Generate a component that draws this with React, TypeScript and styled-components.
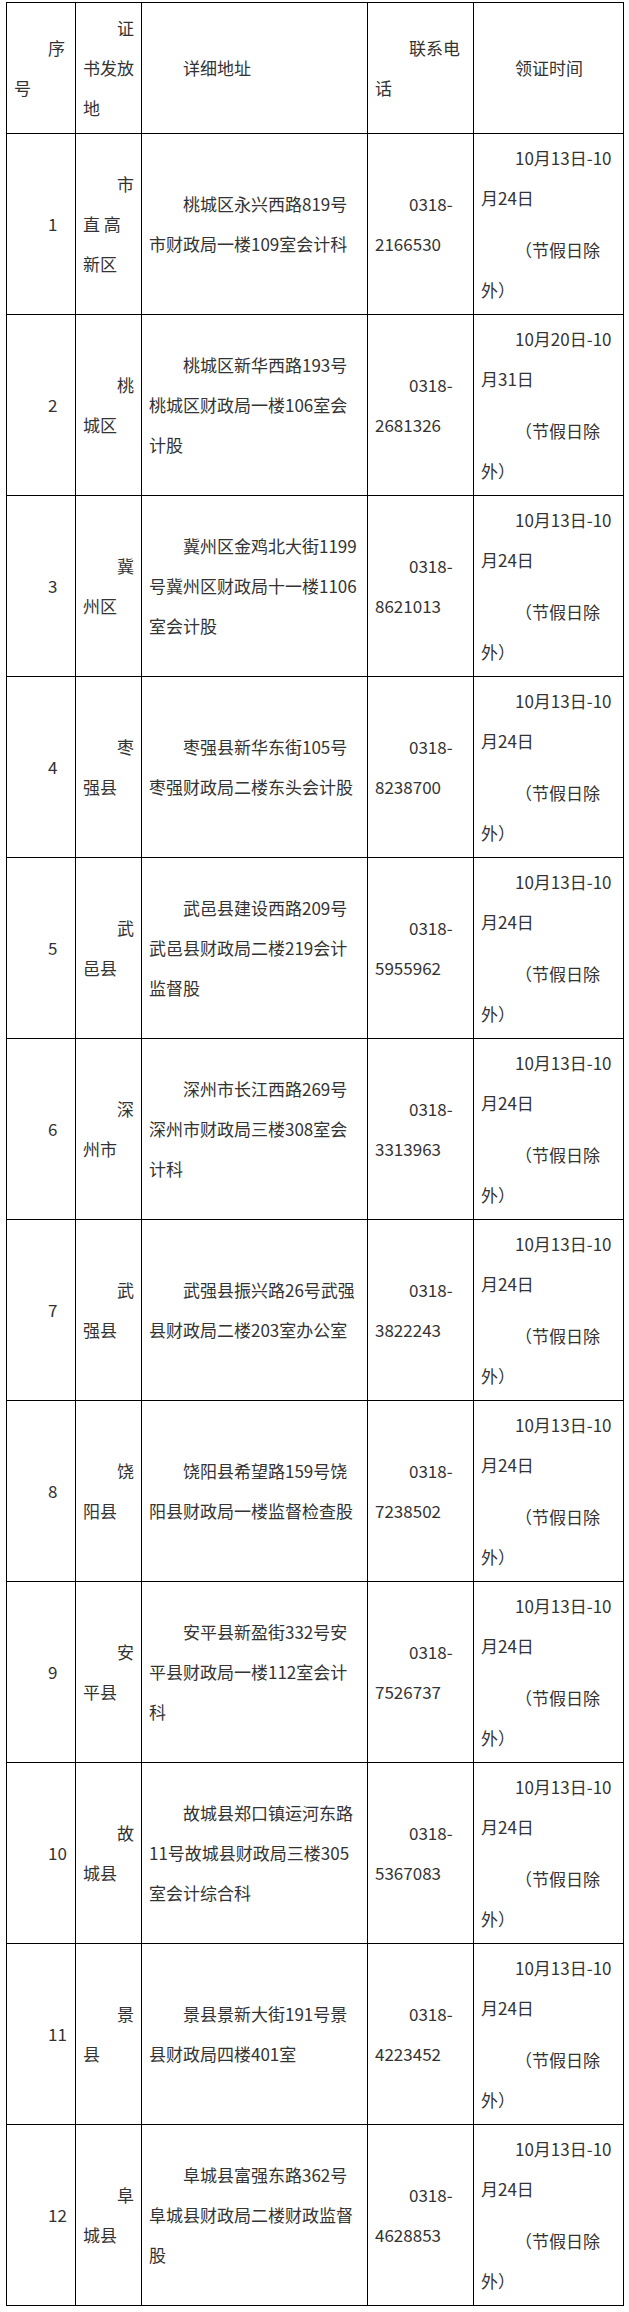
import styled, { createGlobalStyle } from 'styled-components';

const GlobalStyle = createGlobalStyle`
  body {
    margin: 0;
    background: #fff;
    font-family: "Noto Sans CJK SC", "Noto Sans", sans-serif;
    color: #333;
  }
`;

const rows = [
  { no: '1', place: '市直 高新区', address: '桃城区永兴西路819号市财政局一楼109室会计科', phone: '0318-2166530', time: '10月13日-10月24日' },
  { no: '2', place: '桃城区', address: '桃城区新华西路193号桃城区财政局一楼106室会计股', phone: '0318-2681326', time: '10月20日-10月31日' },
  { no: '3', place: '冀州区', address: '冀州区金鸡北大街1199号冀州区财政局十一楼1106室会计股', phone: '0318-8621013', time: '10月13日-10月24日' },
  { no: '4', place: '枣强县', address: '枣强县新华东街105号枣强财政局二楼东头会计股', phone: '0318-8238700', time: '10月13日-10月24日' },
  { no: '5', place: '武邑县', address: '武邑县建设西路209号武邑县财政局二楼219会计监督股', phone: '0318-5955962', time: '10月13日-10月24日' },
  { no: '6', place: '深州市', address: '深州市长江西路269号深州市财政局三楼308室会计科', phone: '0318-3313963', time: '10月13日-10月24日' },
  { no: '7', place: '武强县', address: '武强县振兴路26号武强县财政局二楼203室办公室', phone: '0318-3822243', time: '10月13日-10月24日' },
  { no: '8', place: '饶阳县', address: '饶阳县希望路159号饶阳县财政局一楼监督检查股', phone: '0318-7238502', time: '10月13日-10月24日' },
  { no: '9', place: '安平县', address: '安平县新盈街332号安平县财政局一楼112室会计科', phone: '0318-7526737', time: '10月13日-10月24日' },
  { no: '10', place: '故城县', address: '故城县郑口镇运河东路11号故城县财政局三楼305室会计综合科', phone: '0318-5367083', time: '10月13日-10月24日' },
  { no: '11', place: '景县', address: '景县景新大街191号景县财政局四楼401室', phone: '0318-4223452', time: '10月13日-10月24日' },
  { no: '12', place: '阜城县', address: '阜城县富强东路362号阜城县财政局二楼财政监督股', phone: '0318-4628853', time: '10月13日-10月24日' },
];

const widths = [69, 66, 226, 106, 150];

export default function App() {
  return (
    <>
      <GlobalStyle />
      <StyledPage>
        <StyledTable>
          <colgroup>
            {widths.map((w, i) => (
              <col key={i} style={{ width: w }} />
            ))}
          </colgroup>
          <thead>
            <tr>
              <StyledHeadCell><StyledP>序号</StyledP></StyledHeadCell>
              <StyledHeadCell><StyledP>证书发放地</StyledP></StyledHeadCell>
              <StyledHeadCell><StyledP>详细地址</StyledP></StyledHeadCell>
              <StyledHeadCell><StyledP>联系电话</StyledP></StyledHeadCell>
              <StyledHeadCell><StyledP>领证时间</StyledP></StyledHeadCell>
            </tr>
          </thead>
          <tbody>
            {rows.map((row) => (
              <tr key={row.no}>
                <StyledCell><StyledP>{row.no}</StyledP></StyledCell>
                <StyledCell><StyledP>{row.place}</StyledP></StyledCell>
                <StyledCell><StyledP>{row.address}</StyledP></StyledCell>
                <StyledCell><StyledP>{row.phone}</StyledP></StyledCell>
                <StyledCell>
                  <StyledP>{row.time}</StyledP>
                  <StyledP $note>（节假日除外）</StyledP>
                </StyledCell>
              </tr>
            ))}
          </tbody>
        </StyledTable>
      </StyledPage>
    </>
  );
}

const StyledPage = styled.div`
  padding: 2px 0 0 6px;
`;

const StyledTable = styled.table`
  table-layout: fixed;
  width: 618px;
  border-collapse: separate;
  border-spacing: 0;
  border-top: 1px solid #000;
  border-left: 1px solid #000;
`;

const StyledCellBase = styled.td`
  box-sizing: border-box;
  padding: 0 6px 0 7px;
  border-right: 1px solid #000;
  border-bottom: 1px solid #000;
  vertical-align: middle;
  font-size: 17px;
  line-height: 40px;
  font-weight: normal;
  text-align: left;
  color: #333;
`;

const StyledHeadCell = styled(StyledCellBase).attrs({ as: 'th' })`
  height: 131px;
`;

const StyledCell = styled(StyledCellBase)`
  height: 181px;
`;

const StyledP = styled.p<{ $note?: boolean }>`
  margin: ${({ $note }) => ($note ? '12px 0 0' : '0')};
  text-indent: 2em;
`;
